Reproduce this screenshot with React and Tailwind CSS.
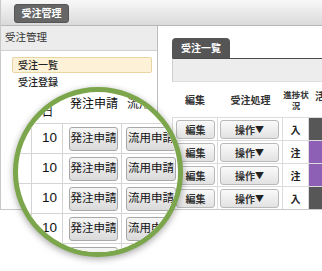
import React from 'react';

const rows = [
  { status: '入', color: 'bg-[#575757]' },
  { status: '注', color: 'bg-[#8d5fb5]' },
  { status: '注', color: 'bg-[#8d5fb5]' },
  { status: '入', color: 'bg-[#575757]' },
];

function SmallButton({ children, className }) {
  return (
    <div
      className={`h-[19px] flex items-center justify-center rounded-[3px] border border-[#b9b9b9] bg-gradient-to-b from-[#fafafa] to-[#e2e2e2] text-[10px] font-bold text-[#333] ${className}`}
    >
      {children}
    </div>
  );
}

function OrderTable() {
  return (
    <div className="ml-[14px] flex flex-col font-['Noto_Sans_CJK_JP',sans-serif]">
      {/* header */}
      <div className="flex h-[35px] items-center text-[10px] font-bold text-[#333] leading-[12px]">
        <div className="w-[46px] text-center">編集</div>
        <div className="w-[65px] text-center">受注処理</div>
        <div className="w-[26px] flex flex-col items-center whitespace-nowrap text-[8.5px] leading-[11px]">
          <span>進捗状</span>
          <span>況</span>
        </div>
        <div className="flex-1 overflow-hidden -mt-[8px]">
          <span className="ml-[6px] whitespace-nowrap">活動</span>
        </div>
      </div>
      {rows.map((r, i) => (
        <div key={i} className="flex h-[23px] border-t border-[#dcdcdc]">
          <div className="w-[46px] border-l border-r border-[#dcdcdc] pl-[3px] pt-[2px]">
            <SmallButton className="w-[39px]">編集</SmallButton>
          </div>
          <div className="w-[65px] border-r border-[#dcdcdc] pl-[2px] pt-[2px]">
            <SmallButton className="w-[59px]">
              操作<span className="text-[9px] text-[#222]">▼</span>
            </SmallButton>
          </div>
          <div className="w-[26px] border-r border-[#dcdcdc] flex items-center justify-center text-[10px] font-bold text-[#222]">
            {r.status}
          </div>
          <div className={`flex-1 ${r.color}`}></div>
        </div>
      ))}
    </div>
  );
}

function MagnifiedTable() {
  const cell = 'border-r border-[#d4d4d4]';
  const btn =
    'h-[24px] rounded-[3px] border border-[#a8a8a8] bg-gradient-to-b from-[#f6f6f6] to-[#dadada] flex items-center justify-center text-[11.5px] whitespace-nowrap';
  return (
    <div className="w-[322px] -ml-[18px] -mt-[92px] pt-[84px] text-[#111]">
      <div className="flex h-[40px] border-b border-[#d4d4d4] items-center text-[12px] leading-[16px]">
        <div className="w-[32px]"></div>
        <div className="w-[31px] text-center">発注日</div>
        <div className="w-[59px] pl-[7px] whitespace-nowrap">発注申請</div>
        <div className="w-[21px] ml-[5px] overflow-hidden whitespace-nowrap">流用申請</div>
      </div>
      {[0, 1, 2, 3, 4].map((i) => (
        <div key={i} className="flex h-[30px] border-b border-[#d4d4d4]">
          <div className={`w-[32px] ${cell}`}></div>
          <div className={`w-[31px] ${cell} flex items-center justify-end pr-[5px] text-[13.5px]`}>10</div>
          <div className={`w-[59px] ${cell} pl-[6px] pt-[3px]`}>
            <div className={`w-[49px] ${btn}`}>発注申請</div>
          </div>
          <div className="w-[60px] pl-[4px] pt-[3px]">
            <div className={`w-[50px] ${btn}`}>流用申請</div>
          </div>
        </div>
      ))}
    </div>
  );
}

export default function App() {
  return (
    <div className="relative w-[322px] h-[271px] bg-white overflow-hidden font-['Liberation_Sans','Noto_Sans_CJK_JP',sans-serif]">
      <div className="h-[210px] flex flex-col border-l border-b border-[#c9c9c9]">
        {/* top bar */}
        <div className="h-[26px] shrink-0 border-b border-[#b7b7b7] bg-gradient-to-b from-[#f8f8f8] to-[#dadada] pl-[13px] pt-[4px]">
          <div className="w-[55px] h-[19px] rounded-[3px] bg-[#666] border border-[#555] flex items-center justify-center text-[10px] font-bold text-white">
            受注管理
          </div>
        </div>

        <div className="flex flex-1 min-h-0">
          {/* left panel */}
          <div className="w-[157px] shrink-0 border-r border-[#bdbdbd] flex flex-col">
            <div className="h-[25px] border-b border-[#d2d2d2] bg-[#ececec] flex items-center pl-[4px] text-[10.5px] text-[#333]">
              受注管理
            </div>
            <div className="pt-[6px] flex flex-col text-[10px] text-[#222] font-medium">
              <div className="ml-[11px] w-[140px] h-[16px] rounded-[2px] border border-[#e7d5a3] bg-[#fdf2d8] pl-[5px] flex items-center">
                受注一覧
              </div>
              <div className="ml-[17px] mt-[2px] h-[14px] flex items-center">受注登録</div>
            </div>
          </div>

          {/* right panel */}
          <div className="flex-1 min-w-0 flex flex-col pt-[12px]">
            <div className="ml-[14px] w-[58px] h-[22px] rounded-t-[4px] bg-[#555] flex items-center justify-center text-[10px] font-bold text-white">
              受注一覧
            </div>
            <div className="ml-[14px] h-[26px] border-t border-[#4a4a4a] border-l border-b border-l-[#cfcfcf] border-b-[#dedede] bg-[#ededed]"></div>
            <OrderTable />
          </div>
        </div>
      </div>

      {/* magnifier */}
      <div className="absolute left-[13px] top-[87px] w-[170px] h-[170px] rounded-full border-[5px] border-[#7ca64b] bg-white overflow-hidden shadow-[0_2px_7px_rgba(0,0,0,0.35)]">
        <MagnifiedTable />
      </div>
    </div>
  );
}
